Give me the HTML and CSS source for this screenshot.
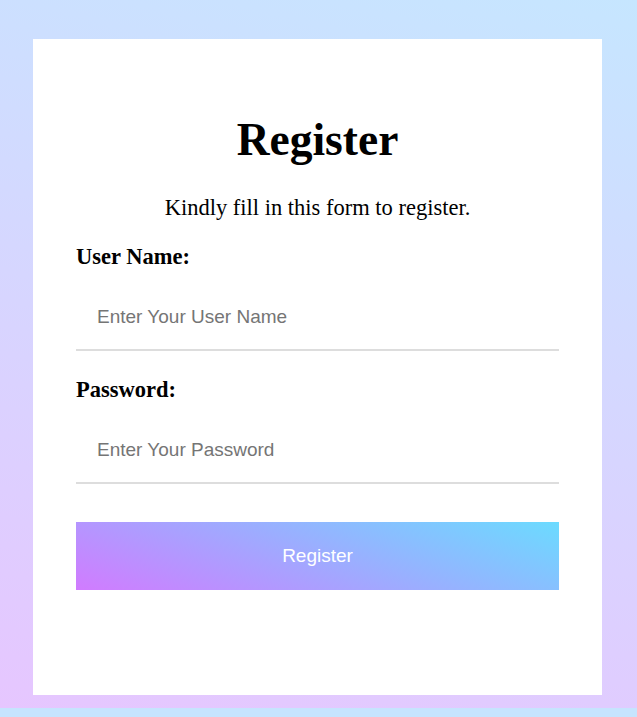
FILE: index.html
```html
<!DOCTYPE html>
<html lang="en">
<head>
<meta charset="utf-8">
<title>Register</title>
<link rel="stylesheet" href="styles.css">
</head>
<body>
  <main class="card">
    <h1 class="title">Register</h1>
    <p class="subtitle">Kindly fill in this form to register.</p>
    <form class="form">
      <label class="label" for="username">User Name:</label>
      <input class="field" id="username" type="text" placeholder="Enter Your User Name">
      <label class="label" for="password">Password:</label>
      <input class="field" id="password" type="password" placeholder="Enter Your Password">
      <button class="btn" type="button">Register</button>
    </form>
  </main>
</body>
</html>
```

FILE: styles.css
```css
html {
  background: #c6e4fe;
}
body {
  margin: 0;
  height: 708px;
  box-sizing: border-box;
  padding: 39px 0 13px;
  background: linear-gradient(15deg, #e6c6ff, #c6e6ff);
  font-family: "Liberation Serif", "Times New Roman", serif;
}
.card {
  box-sizing: border-box;
  width: 569px;
  height: 656px;
  margin: 0 0 0 33px;
  background: #fff;
  padding: 76px 43px 0;
}
.title {
  margin: 0;
  font-size: 45.5px;
  font-weight: bold;
  text-align: center;
  line-height: 50px;
  color: #000;
}
.subtitle {
  margin: 30px 0 0;
  font-size: 22.5px;
  text-align: center;
  line-height: 25px;
}
.form {
  display: flex;
  flex-direction: column;
  margin-top: 24px;
}
.label {
  font-size: 22.5px;
  font-weight: bold;
  line-height: 25px;
}
.label + .field {
  margin-top: 15px;
}
.field + .label {
  margin-top: 26px;
}
.field {
  box-sizing: border-box;
  width: 100%;
  border: none;
  border-bottom: 2px solid #dddddd;
  padding: 22px 21px;
  font-family: "Liberation Sans", Arial, sans-serif;
  font-size: 19px;
  line-height: 21px;
  height: 67px;
  outline: none;
  color: #333;
  background: #fff;
}
.field::placeholder {
  color: #757575;
}
.btn {
  margin-top: 38px;
  height: 68px;
  border: none;
  background: linear-gradient(20deg, #d17bff, #6bdbff);
  color: #fff;
  font-family: "Liberation Sans", Arial, sans-serif;
  font-size: 19px;
  cursor: pointer;
}
```
